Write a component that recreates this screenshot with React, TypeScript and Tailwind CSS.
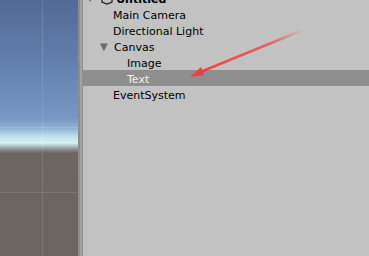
import React from "react";

const rows = [
  { label: "Main Camera", indent: "pl-[30px]" },
  { label: "Directional Light", indent: "pl-[30px]" },
  { label: "Canvas", indent: "pl-[31px]", open: true },
  { label: "Image", indent: "pl-[44px]" },
  { label: "Text", indent: "pl-[44px]", selected: true },
  { label: "EventSystem", indent: "pl-[30px]" },
];

function SceneView() {
  return (
    <div className="relative w-[78px] h-full shrink-0 bg-[linear-gradient(180deg,#526a95_0px,#6583b0_70px,#7897c2_118px,#8fb0d2_128px,#c2e3ec_137px,#d6f1f2_143px,#8e9594_149px,#6d6660_153px,#6b645f_256px)]">
      {/* grid lines */}
      <div className="absolute left-[42px] top-0 bottom-0 w-px bg-[#ffffff]/10" />
      <div className="absolute left-0 right-0 top-[127px] h-px bg-[#ffffff]/15" />
      <div className="absolute left-0 right-0 top-[192px] h-px bg-[#ffffff]/10" />
    </div>
  );
}

function Arrow() {
  return (
    <svg className="absolute left-0 top-0" width="369" height="256" viewBox="0 0 369 256">
      <defs>
        <linearGradient id="fade" x1="303" y1="30" x2="195" y2="75" gradientUnits="userSpaceOnUse">
          <stop offset="0" stopColor="#f04848" stopOpacity="0" />
          <stop offset="0.3" stopColor="#f04848" stopOpacity="0.8" />
          <stop offset="1" stopColor="#f04040" />
        </linearGradient>
      </defs>
      <line x1="303" y1="30" x2="198" y2="73" stroke="url(#fade)" strokeWidth="2.5" strokeLinecap="round" />
      <polygon points="190,77 201,67 204,75" fill="#f04040" />
    </svg>
  );
}

export default function App() {
  return (
    <div className="relative w-[369px] h-[256px] overflow-hidden flex bg-[#c2c2c2] font-['DejaVu_Sans',sans-serif]">
      <SceneView />
      <div className="w-[2px] h-full bg-[#8c8c8c]" />
      <div className="w-[2px] h-full bg-[#a3a3a3]" />
      <div className="w-px h-full bg-[#909090]" />
      <div className="flex-1 flex flex-col text-[11px] leading-none">
        <div className="-mt-[10px] h-4 flex items-center pt-[2px] pl-[4px] gap-[3px] font-bold text-black">
          <span className="text-[8px] text-[#6b6b6b]">▼</span>
          <svg width="12" height="12" viewBox="0 0 12 12" className="ml-[5px]">
            <path d="M6 1 L11 4 L11 9 L6 11 L1 9 L1 4 Z" fill="none" stroke="#222" strokeWidth="1.3" />
          </svg>
          <span>Untitled</span>
        </div>
        {rows.map((r) => (
          <div
            key={r.label}
            className={`h-4 flex items-center pt-[2px] ${r.indent} ${r.selected ? "bg-[#8e8e8e] text-[#f0f0f0]" : "text-black"}`}
          >
            {r.open && <span className="text-[10px] text-[#6b6b6b] -ml-[14px] mr-[4px] w-[10px]">▼</span>}
            <span>{r.label}</span>
          </div>
        ))}
      </div>
      <Arrow />
    </div>
  );
}
